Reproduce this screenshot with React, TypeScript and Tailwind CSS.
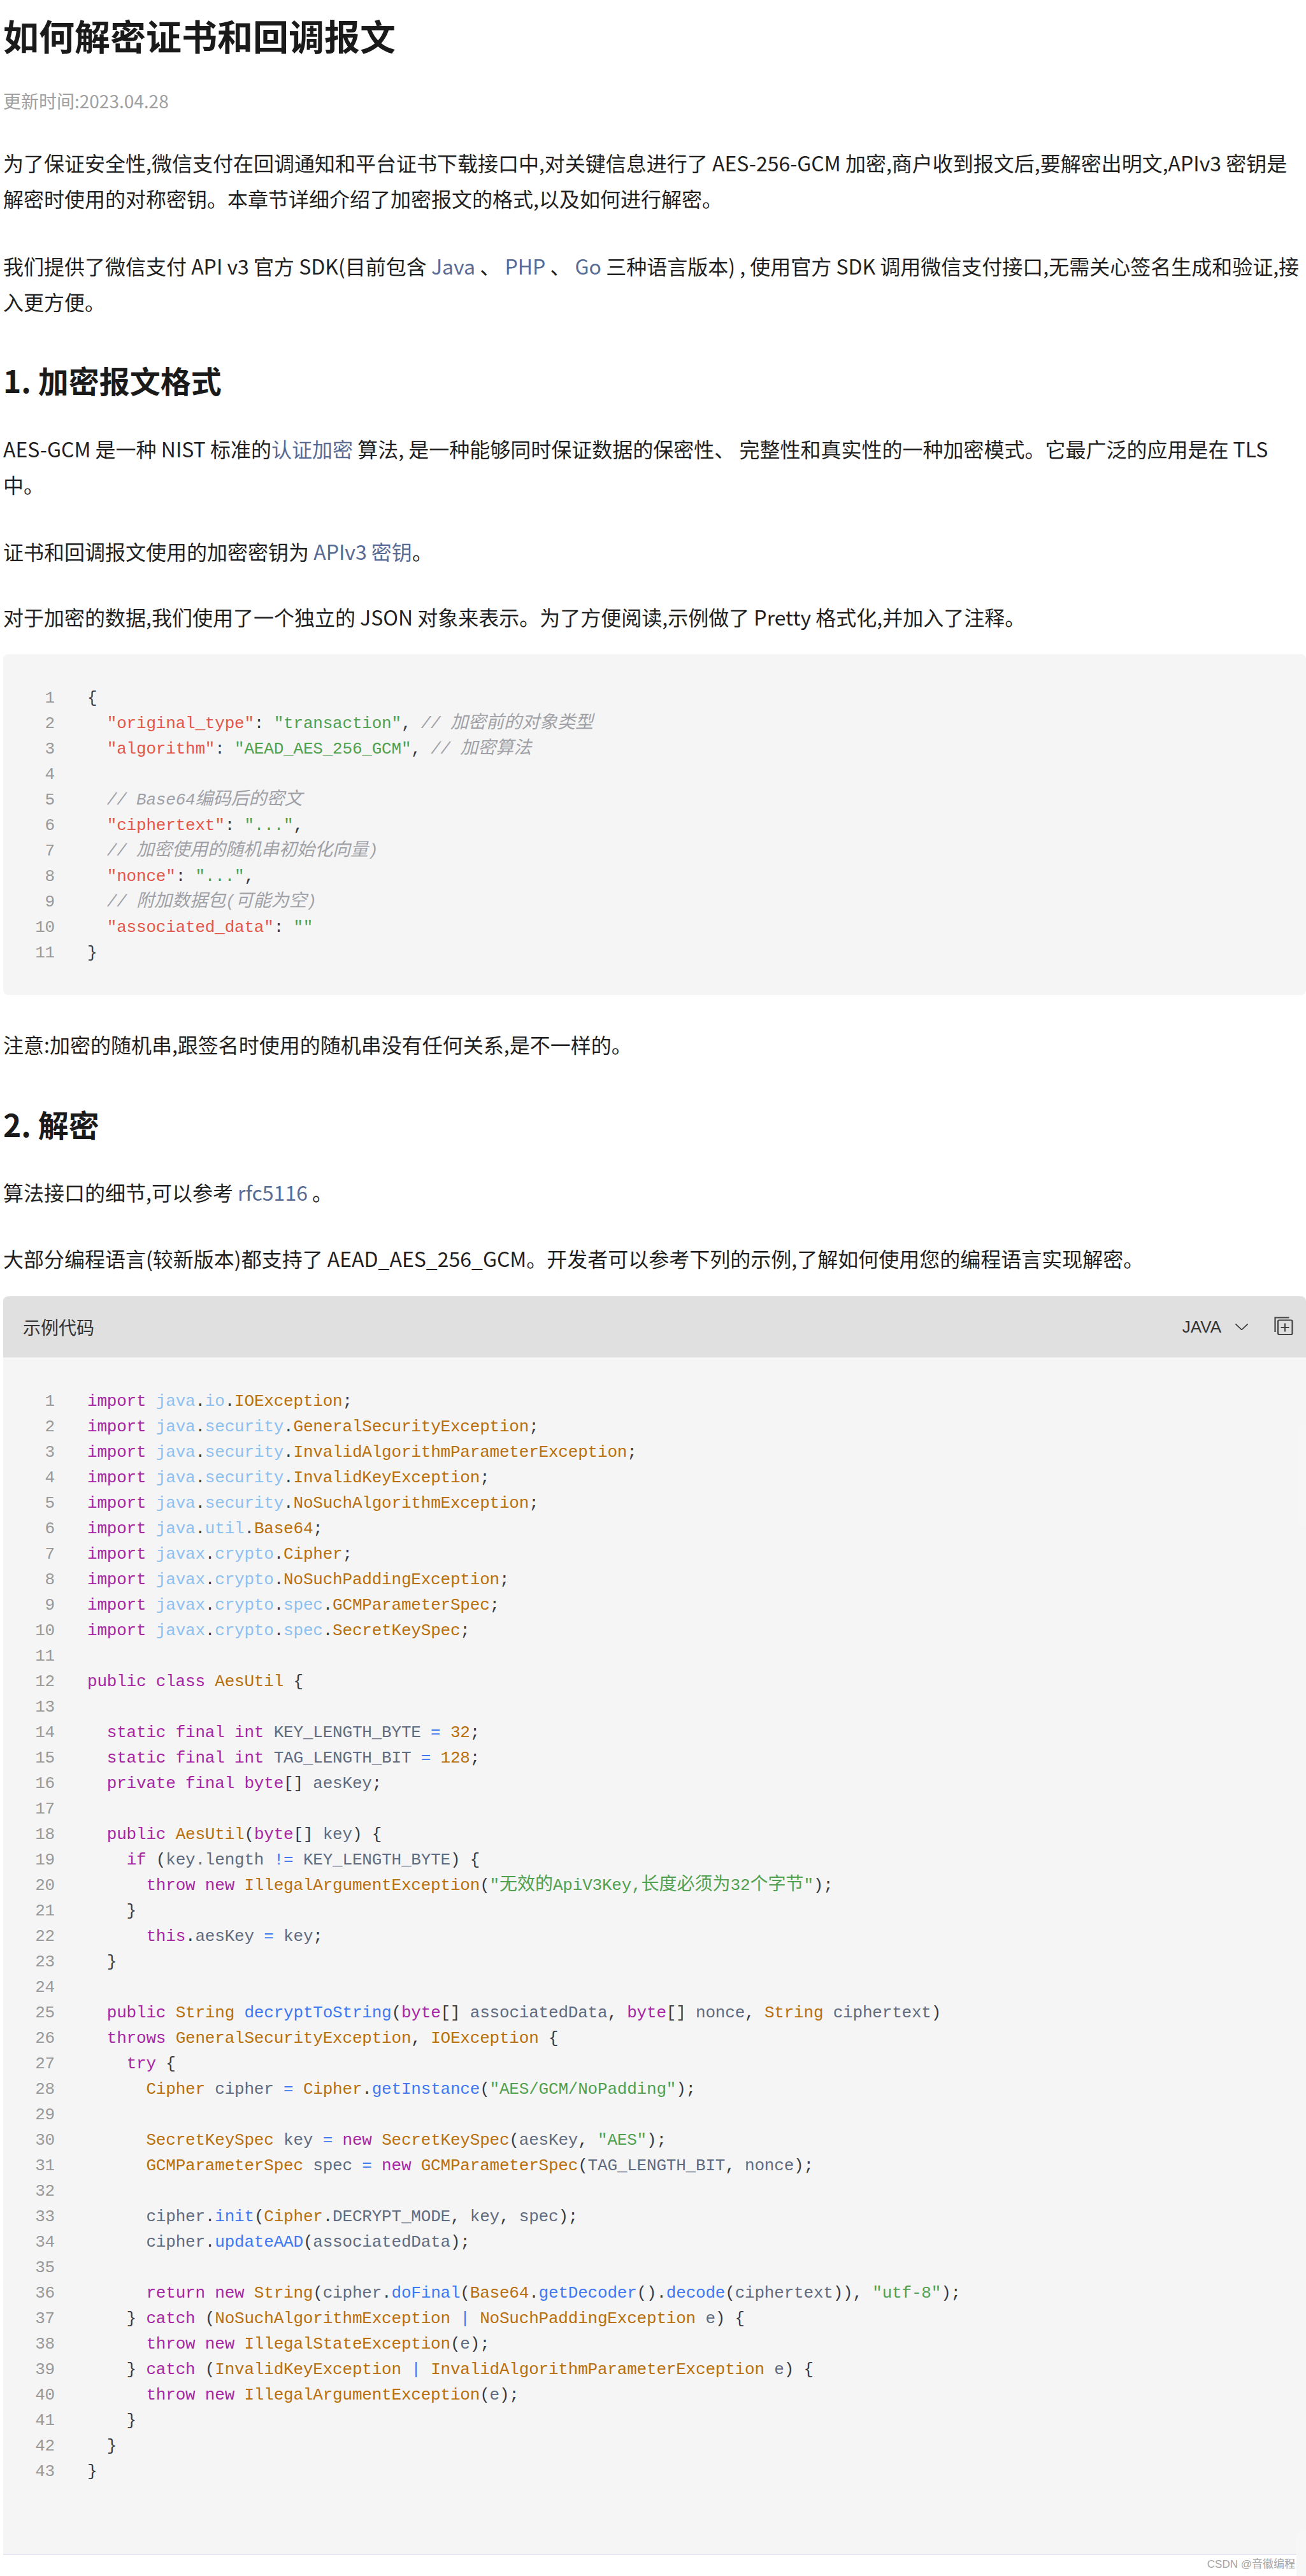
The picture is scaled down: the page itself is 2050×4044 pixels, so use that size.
import React from "react";

type Tok = [string, string];

const cls: Record<string, string> = {
  k: "text-[#a626a4]",
  c: "text-[#b96f0b]",
  p: "text-[#8cc0f0]",
  f: "text-[#4078f2]",
  s: "text-[#50a14f]",
  v: "text-[#5f6b80]",
  o: "text-[#4078f2]",
  d: "text-[#383a42]",
  a: "text-[#e45649]",
  m: "text-[#a0a1a7] italic",
};

function Txt({ text }: { text: string }) {
  const parts = text.split(/([\u3000-\u9fff\uff00-\uffef]+)/);
  return (
    <>
      {parts.map((p, i) =>
        i % 2 === 1 ? (
          <span key={i} className="text-[28px] tracking-normal">
            {p}
          </span>
        ) : (
          <span key={i}>{p}</span>
        )
      )}
    </>
  );
}

function Code({ lines }: { lines: Tok[][] }) {
  return (
    <div className="font-['Liberation_Mono','Noto_Sans_CJK_SC',monospace] text-[26px] tracking-[-0.2px] leading-[40px] whitespace-pre">
      {lines.map((l, i) => (
        <div key={i} className="flex h-[40px]">
          <span className="w-[81px] text-right text-[#999999] shrink-0">{i + 1}</span>
          <span className="ml-[51px]">
            {l.map((t, j) => (
              <span key={j} className={cls[t[0]]}>
                <Txt text={t[1]} />
              </span>
            ))}
          </span>
        </div>
      ))}
    </div>
  );
}

const imp = (pk: [string, string?, string?], c: string): Tok[] => {
  const out: Tok[] = [["k", "import"], ["d", " "]];
  pk.forEach((p) => {
    if (p) {
      out.push(["p", p]);
      out.push(["d", "."]);
    }
  });
  out.push(["c", c]);
  out.push(["d", ";"]);
  return out;
};

const jsonLines: Tok[][] = [
  [["d", "{"]],
  [["d", "  "], ["a", '"original_type"'], ["d", ": "], ["s", '"transaction"'], ["d", ", "], ["m", "// 加密前的对象类型"]],
  [["d", "  "], ["a", '"algorithm"'], ["d", ": "], ["s", '"AEAD_AES_256_GCM"'], ["d", ", "], ["m", "// 加密算法"]],
  [],
  [["d", "  "], ["m", "// Base64编码后的密文"]],
  [["d", "  "], ["a", '"ciphertext"'], ["d", ": "], ["s", '"..."'], ["d", ","]],
  [["d", "  "], ["m", "// 加密使用的随机串初始化向量)"]],
  [["d", "  "], ["a", '"nonce"'], ["d", ": "], ["s", '"..."'], ["d", ","]],
  [["d", "  "], ["m", "// 附加数据包(可能为空)"]],
  [["d", "  "], ["a", '"associated_data"'], ["d", ": "], ["s", '""']],
  [["d", "}"]],
];

const javaLines: Tok[][] = [
  imp(["java", "io"], "IOException"),
  imp(["java", "security"], "GeneralSecurityException"),
  imp(["java", "security"], "InvalidAlgorithmParameterException"),
  imp(["java", "security"], "InvalidKeyException"),
  imp(["java", "security"], "NoSuchAlgorithmException"),
  imp(["java", "util"], "Base64"),
  imp(["javax", "crypto"], "Cipher"),
  imp(["javax", "crypto"], "NoSuchPaddingException"),
  imp(["javax", "crypto", "spec"], "GCMParameterSpec"),
  imp(["javax", "crypto", "spec"], "SecretKeySpec"),
  [],
  [["k", "public class "], ["c", "AesUtil"], ["d", " {"]],
  [],
  [["d", "  "], ["k", "static final int "], ["v", "KEY_LENGTH_BYTE "], ["o", "="], ["d", " "], ["c", "32"], ["d", ";"]],
  [["d", "  "], ["k", "static final int "], ["v", "TAG_LENGTH_BIT "], ["o", "="], ["d", " "], ["c", "128"], ["d", ";"]],
  [["d", "  "], ["k", "private final byte"], ["d", "[] "], ["v", "aesKey"], ["d", ";"]],
  [],
  [["d", "  "], ["k", "public "], ["c", "AesUtil"], ["d", "("], ["k", "byte"], ["d", "[] "], ["v", "key"], ["d", ") {"]],
  [["d", "    "], ["k", "if"], ["d", " ("], ["v", "key.length "], ["o", "!="], ["d", " "], ["v", "KEY_LENGTH_BYTE"], ["d", ") {"]],
  [["d", "      "], ["k", "throw new "], ["c", "IllegalArgumentException"], ["d", "("], ["s", '"无效的ApiV3Key,长度必须为32个字节"'], ["d", ");"]],
  [["d", "    }"]],
  [["d", "      "], ["k", "this"], ["d", "."], ["v", "aesKey "], ["o", "="], ["d", " "], ["v", "key"], ["d", ";"]],
  [["d", "  }"]],
  [],
  [["d", "  "], ["k", "public "], ["c", "String "], ["f", "decryptToString"], ["d", "("], ["k", "byte"], ["d", "[] "], ["v", "associatedData"], ["d", ", "], ["k", "byte"], ["d", "[] "], ["v", "nonce"], ["d", ", "], ["c", "String "], ["v", "ciphertext"], ["d", ")"]],
  [["d", "  "], ["k", "throws "], ["c", "GeneralSecurityException"], ["d", ", "], ["c", "IOException"], ["d", " {"]],
  [["d", "    "], ["k", "try"], ["d", " {"]],
  [["d", "      "], ["c", "Cipher "], ["v", "cipher "], ["o", "="], ["d", " "], ["c", "Cipher"], ["d", "."], ["f", "getInstance"], ["d", "("], ["s", '"AES/GCM/NoPadding"'], ["d", ");"]],
  [],
  [["d", "      "], ["c", "SecretKeySpec "], ["v", "key "], ["o", "="], ["d", " "], ["k", "new "], ["c", "SecretKeySpec"], ["d", "("], ["v", "aesKey"], ["d", ", "], ["s", '"AES"'], ["d", ");"]],
  [["d", "      "], ["c", "GCMParameterSpec "], ["v", "spec "], ["o", "="], ["d", " "], ["k", "new "], ["c", "GCMParameterSpec"], ["d", "("], ["v", "TAG_LENGTH_BIT"], ["d", ", "], ["v", "nonce"], ["d", ");"]],
  [],
  [["d", "      "], ["v", "cipher"], ["d", "."], ["f", "init"], ["d", "("], ["c", "Cipher"], ["d", "."], ["v", "DECRYPT_MODE"], ["d", ", "], ["v", "key"], ["d", ", "], ["v", "spec"], ["d", ");"]],
  [["d", "      "], ["v", "cipher"], ["d", "."], ["f", "updateAAD"], ["d", "("], ["v", "associatedData"], ["d", ");"]],
  [],
  [["d", "      "], ["k", "return new "], ["c", "String"], ["d", "("], ["v", "cipher"], ["d", "."], ["f", "doFinal"], ["d", "("], ["c", "Base64"], ["d", "."], ["f", "getDecoder"], ["d", "()."], ["f", "decode"], ["d", "("], ["v", "ciphertext"], ["d", ")), "], ["s", '"utf-8"'], ["d", ");"]],
  [["d", "    } "], ["k", "catch"], ["d", " ("], ["c", "NoSuchAlgorithmException "], ["o", "|"], ["d", " "], ["c", "NoSuchPaddingException "], ["v", "e"], ["d", ") {"]],
  [["d", "      "], ["k", "throw new "], ["c", "IllegalStateException"], ["d", "("], ["v", "e"], ["d", ");"]],
  [["d", "    } "], ["k", "catch"], ["d", " ("], ["c", "InvalidKeyException "], ["o", "|"], ["d", " "], ["c", "InvalidAlgorithmParameterException "], ["v", "e"], ["d", ") {"]],
  [["d", "      "], ["k", "throw new "], ["c", "IllegalArgumentException"], ["d", "("], ["v", "e"], ["d", ");"]],
  [["d", "    }"]],
  [["d", "  }"]],
  [["d", "}"]],
];

function A({ children }: { children: React.ReactNode }) {
  return <a className="text-[#576b95]">{children}</a>;
}

function P({ className, children }: { className: string; children: React.ReactNode }) {
  return <p className={`text-[32px] leading-[56px] ${className}`}>{children}</p>;
}

export default function App() {
  return (
    <div className="relative h-[4044px] bg-white overflow-hidden pl-[5px] pt-[19px] text-[#1f1f1f] font-['Noto_Sans_CJK_SC','Noto_Sans',sans-serif]">
      <h1 className="text-[56px] leading-[72px] font-bold text-[#1a1a1a]">如何解密证书和回调报文</h1>
      <div className="mt-[47px] text-[28px] leading-[40px] text-[#a0a0a0]">更新时间:2023.04.28</div>
      <P className="mt-[49px]">
        为了保证安全性,微信支付在回调通知和平台证书下载接口中,对关键信息进行了 AES-256-GCM 加密,商户收到报文后,要解密出明文,APIv3 密钥是解密时使用的对称密钥。本章节详细介绍了加密报文的格式,以及如何进行解密。
      </P>
      <P className="mt-[50px]">
        我们提供了微信支付 API v3 官方 SDK(目前包含 <A>Java</A> 、 <A>PHP</A> 、 <A>Go</A> 三种语言版本) , 使用官方 SDK 调用微信支付接口,无需关心签名生成和验证,接入更方便。
      </P>
      <h2 className="mt-[63px] text-[48px] leading-[64px] font-bold text-[#1a1a1a]">1. 加密报文格式</h2>
      <P className="mt-[48px]">
        AES-GCM 是一种 NIST 标准的<A>认证加密</A> 算法, 是一种能够同时保证数据的保密性、 完整性和真实性的一种加密模式。它最广泛的应用是在 TLS 中。
      </P>
      <P className="mt-[49px]">
        证书和回调报文使用的加密密钥为 <A>APIv3 密钥</A>。
      </P>
      <P className="mt-[47px]">对于加密的数据,我们使用了一个独立的 JSON 对象来表示。为了方便阅读,示例做了 Pretty 格式化,并加入了注释。</P>
      <div className="mt-[31px] h-[535px] rounded-[8px] bg-[#f5f5f5] pt-[49px]">
        <Code lines={jsonLines} />
      </div>
      <P className="mt-[49px]">注意:加密的随机串,跟签名时使用的随机串没有任何关系,是不一样的。</P>
      <h2 className="mt-[65px] text-[48px] leading-[64px] font-bold text-[#1a1a1a]">2. 解密</h2>
      <P className="mt-[47px]">
        算法接口的细节,可以参考 <A>rfc5116</A> 。
      </P>
      <P className="mt-[48px]">大部分编程语言(较新版本)都支持了 AEAD_AES_256_GCM。开发者可以参考下列的示例,了解如何使用您的编程语言实现解密。</P>
      <div className="mt-[32px] rounded-t-[8px] overflow-hidden">
        <div className="flex h-[96px] items-center justify-between bg-[#e0e0e0] pl-[31px] pr-[18px] text-[#333333]">
          <span className="text-[28px]">示例代码</span>
          <div className="flex items-center">
            <span className="font-['Liberation_Sans',sans-serif] text-[26px]">JAVA</span>
            <svg width="20" height="10" viewBox="0 0 20 10" fill="none" className="ml-[22px]">
              <path d="M0.5 0.5L10 9.5L19.5 0.5" stroke="#333333" strokeWidth="1.6" />
            </svg>
            <svg width="32" height="32" viewBox="0 0 32 32" fill="none" className="ml-[41px]">
              <path d="M1.5 24V1.5H23.5" stroke="#444444" strokeWidth="2.2" />
              <rect x="6" y="5.5" width="22.5" height="22.5" rx="2" stroke="#444444" strokeWidth="2.2" />
              <path d="M17 10.5V23.5M10.5 17H23.5" stroke="#444444" strokeWidth="2" />
            </svg>
          </div>
        </div>
        <div className="h-[1880px] border-b-2 border-[#e6e6f2] bg-[#f5f5f5] pt-[49px]">
          <Code lines={javaLines} />
        </div>
      </div>
      <div className="absolute right-0 top-[2235px] h-[160px] w-[15px] rounded-tl-[8px] bg-[#f6f6f6]" />
      <div className="absolute right-0 top-[3973px] h-[71px] w-[15px] rounded-tl-[8px] bg-[#f7f7f7]" />
      <div className="absolute right-[17px] top-[4014px] font-['Liberation_Sans','Noto_Sans_CJK_SC',sans-serif] text-[17px] leading-[24px] text-[#a3a3a3]">
        CSDN @音徽编程
      </div>
    </div>
  );
}
